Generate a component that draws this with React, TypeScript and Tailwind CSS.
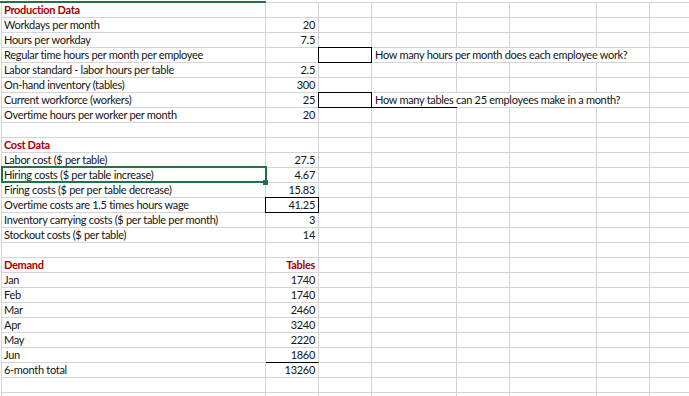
import React from "react";

type RowSpec = {
  a?: string;
  aRed?: boolean;
  b?: string;
  bRed?: boolean;
  bBox?: boolean;
  bBottom?: boolean;
  cBox?: boolean;
  d?: string;
  dBottom?: boolean;
};

const rows: RowSpec[] = [
  { a: "Production Data", aRed: true },
  { a: "Workdays per month", b: "20" },
  { a: "Hours per workday", b: "7.5" },
  { a: "Regular time hours per month per employee", cBox: true, d: "How many hours per month does each employee work?" },
  { a: "Labor standard - labor hours per table", b: "2.5" },
  { a: "On-hand inventory (tables)", b: "300" },
  { a: "Current workforce (workers)", b: "25", cBox: true, d: "How many tables can 25 employees make in a month?", dBottom: true },
  { a: "Overtime hours per worker per month", b: "20" },
  {},
  { a: "Cost Data", aRed: true },
  { a: "Labor cost ($ per table)", b: "27.5" },
  { a: "Hiring costs ($ per table increase)", b: "4.67" },
  { a: "Firing costs ($ per per table decrease)", b: "15.83" },
  { a: "Overtime costs are 1.5 times hours wage", b: "41.25", bBox: true },
  { a: "Inventory carrying costs ($ per table per month)", b: "3" },
  { a: "Stockout costs ($ per table)", b: "14" },
  {},
  { a: "Demand", aRed: true, b: "Tables", bRed: true },
  { a: "Jan", b: "1740" },
  { a: "Feb", b: "1740" },
  { a: "Mar", b: "2460" },
  { a: "Apr", b: "3240" },
  { a: "May", b: "2220" },
  { a: "Jun", b: "1860", bBottom: true },
  { a: "6-month total", b: "13260" },
  {},
  {},
];

const GR = "border-r border-r-[#d4d4d4]";
const GB = "border-b border-b-[#d4d4d4]";
const BB = "border-b border-b-black";
const RED = "font-bold text-[#a80000]";

function Row({ r }: { r: RowSpec }) {
  const over = !!r.d;
  return (
    <div className="flex h-[15px] leading-[14px]">
      <div className={`w-[264px] shrink-0 pl-[2px] whitespace-nowrap overflow-hidden ${GR} ${GB} ${r.aRed ? RED : ""}`}>
        {r.a}
      </div>
      <div className={`relative w-[53px] shrink-0 pr-[3px] text-right whitespace-nowrap ${GR} ${r.bBottom ? BB : GB} ${r.bRed ? RED : ""}`}>
        {r.b}
        {r.bBox && <span className="pointer-events-none absolute -inset-px border border-black" />}
      </div>
      <div className={`relative w-[53px] shrink-0 ${GR} ${GB}`}>
        {r.cBox && <span className="pointer-events-none absolute -inset-px border border-black" />}
      </div>
      <div className={`w-[85px] shrink-0 pl-[3px] whitespace-nowrap overflow-visible ${over ? "" : GR} ${r.dBottom ? BB : GB}`}>
        {r.d}
      </div>
      <div className={`w-[53px] shrink-0 ${over ? "" : GR} ${GB}`} />
      <div className={`w-[87px] shrink-0 ${over ? "" : GR} ${GB}`} />
      <div className={`w-[53px] shrink-0 ${GR} ${GB}`} />
      <div className={`w-[120px] shrink-0 ${GR} ${GB}`} />
    </div>
  );
}

export default function App() {
  return (
    <div
      className="relative h-[396px] w-[689px] overflow-hidden bg-white text-[11px] tracking-[-0.3px] text-[#141414]"
      style={{ fontFamily: "Lato, 'Liberation Sans', sans-serif" }}
    >
      <div className="flex h-[3px]">
        <div className="mt-px h-[2px] w-[266px] shrink-0 bg-[#217346]" />
        <div className="mt-[2px] h-px flex-1 bg-[#d4d4d4]" />
      </div>
      <div className="ml-px border-l border-l-[#d4d4d4]">
        {rows.map((r, i) => (
          <Row key={i} r={r} />
        ))}
      </div>
      <div className="pointer-events-none absolute left-px top-[166px] h-[17px] w-[266px] border-2 border-[#217346]" />
      <div className="pointer-events-none absolute left-[263px] top-[180px] h-[5px] w-[5px] bg-[#217346]" />
    </div>
  );
}
